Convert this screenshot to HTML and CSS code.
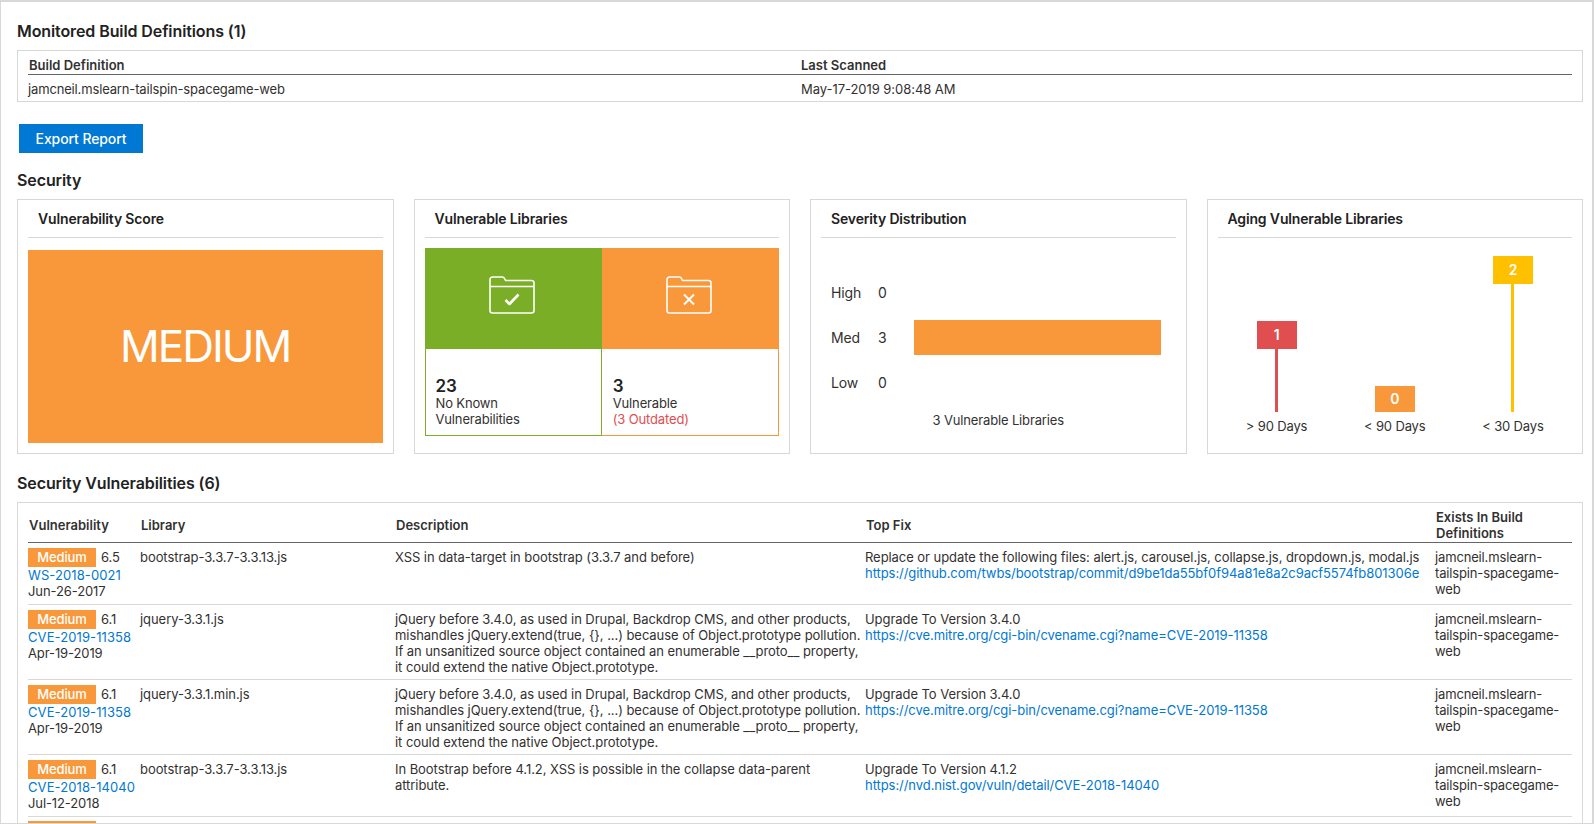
FILE: index.html
```html
<!DOCTYPE html>
<html lang="en">
<head>
  <meta charset="UTF-8">
  <title>Build Report</title>
  <link rel="stylesheet" href="styles.css">
</head>
<body>

<div class="frame">

  <h2 class="section-title first">Monitored Build Definitions (1)</h2>
  <div class="box builds">
    <table class="builds-table">
      <thead>
        <tr><th class="builds-name">Build Definition</th><th>Last Scanned</th></tr>
      </thead>
      <tbody>
        <tr><td>jamcneil.mslearn-tailspin-spacegame-web</td><td class="scanned">May-17-2019 9:08:48 AM</td></tr>
      </tbody>
    </table>
  </div>

  <button class="export-btn">Export Report</button>

  <h2 class="section-title security">Security</h2>
  <div class="cards">

    <div class="box card">
      <div class="card-title">Vulnerability Score</div>
      <div class="score">MEDIUM</div>
    </div>

    <div class="box card">
      <div class="card-title">Vulnerable Libraries</div>
      <div class="libs">
        <div class="lib lib-ok">
          <div class="lib-icon">
            <svg width="46" height="38" viewBox="0 0 46 38" fill="none" stroke="#fff" stroke-width="1.6" stroke-linejoin="round">
              <path d="M1 34.500V3.500A2.500 2.500 0 0 1 3.500 1H13.500a2 2 0 0 1 1.800 1.200L16.500 4.500H42.500A2.500 2.500 0 0 1 45 7V34.500A2.500 2.500 0 0 1 42.500 37H3.500A2.500 2.500 0 0 1 1 34.500z"/>
              <path d="M1 10.500H45"/>
              <path d="M16.500 24l4 4 9-9.500" stroke-width="2.600"/>
            </svg>
          </div>
          <div class="lib-info">
            <div class="lib-count">23</div>
            <div>No Known</div>
            <div>Vulnerabilities</div>
          </div>
        </div>
        <div class="lib lib-bad">
          <div class="lib-icon">
            <svg width="46" height="38" viewBox="0 0 46 38" fill="none" stroke="#fff" stroke-width="1.6" stroke-linejoin="round">
              <path d="M1 34.500V3.500A2.500 2.500 0 0 1 3.500 1H13.500a2 2 0 0 1 1.800 1.200L16.500 4.500H42.500A2.500 2.500 0 0 1 45 7V34.500A2.500 2.500 0 0 1 42.500 37H3.500A2.500 2.500 0 0 1 1 34.500z"/>
              <path d="M1 10.500H45"/>
              <path d="M18 18.500l10 10M28 18.500l-10 10" stroke-width="2"/>
            </svg>
          </div>
          <div class="lib-info">
            <div class="lib-count">3</div>
            <div>Vulnerable</div>
            <div class="outdated">(3 Outdated)</div>
          </div>
        </div>
      </div>
    </div>

    <div class="box card">
      <div class="card-title">Severity Distribution</div>
      <div class="severity">
        <div class="sev-row"><span class="sev-label">High</span><span class="sev-value">0</span></div>
        <div class="sev-row"><span class="sev-label">Med</span><span class="sev-value">3</span><span class="sev-bar" style="width: 247px"></span></div>
        <div class="sev-row"><span class="sev-label">Low</span><span class="sev-value">0</span></div>
      </div>
      <div class="sev-caption">3 Vulnerable Libraries</div>
    </div>

    <div class="box card">
      <div class="card-title">Aging Vulnerable Libraries</div>
      <div class="aging">
        <div class="age-col">
          <div class="flag flag-red">1</div>
          <div class="stem stem-red" style="height: 63px"></div>
          <div class="age-label">&gt; 90 Days</div>
        </div>
        <div class="age-col">
          <div class="flag flag-orange flag-short">0</div>
          <div class="age-label">&lt; 90 Days</div>
        </div>
        <div class="age-col">
          <div class="flag flag-yellow">2</div>
          <div class="stem stem-yellow" style="height: 128px"></div>
          <div class="age-label">&lt; 30 Days</div>
        </div>
      </div>
    </div>

  </div>

  <h2 class="section-title vulns">Security Vulnerabilities (6)</h2>
  <div class="box vuln-box">
    <table class="vuln-table">
      <thead>
        <tr>
          <th class="col-vuln">Vulnerability</th>
          <th class="col-lib">Library</th>
          <th class="col-desc">Description</th>
          <th class="col-fix">Top Fix</th>
          <th class="col-exists">Exists In Build Definitions</th>
        </tr>
      </thead>
      <tbody>
        <tr>
          <td class="vuln-cell"><span class="badge">Medium</span><span class="score-num">6.5</span><br><a href="#">WS-2018-0021</a><br>Jun-26-2017</td>
          <td>bootstrap-3.3.7-3.3.13.js</td>
          <td>XSS in data-target in bootstrap (3.3.7 and before)</td>
          <td>Replace or update the following files: alert.js, carousel.js, collapse.js, dropdown.js, modal.js<br><a href="#">https://github.com/twbs/bootstrap/commit/d9be1da55bf0f94a81e8a2c9acf5574fb801306e</a></td>
          <td class="exists-cell">jamcneil.mslearn-tailspin-spacegame-web</td>
        </tr>
        <tr>
          <td class="vuln-cell"><span class="badge">Medium</span><span class="score-num">6.1</span><br><a href="#">CVE-2019-11358</a><br>Apr-19-2019</td>
          <td>jquery-3.3.1.js</td>
          <td>jQuery before 3.4.0, as used in Drupal, Backdrop CMS, and other products, mishandles jQuery.extend(true, {}, ...) because of Object.prototype pollution. If an unsanitized source object contained an enumerable __proto__ property, it could extend the native Object.prototype.</td>
          <td>Upgrade To Version 3.4.0<br><a href="#">https://cve.mitre.org/cgi-bin/cvename.cgi?name=CVE-2019-11358</a></td>
          <td class="exists-cell">jamcneil.mslearn-tailspin-spacegame-web</td>
        </tr>
        <tr>
          <td class="vuln-cell"><span class="badge">Medium</span><span class="score-num">6.1</span><br><a href="#">CVE-2019-11358</a><br>Apr-19-2019</td>
          <td>jquery-3.3.1.min.js</td>
          <td>jQuery before 3.4.0, as used in Drupal, Backdrop CMS, and other products, mishandles jQuery.extend(true, {}, ...) because of Object.prototype pollution. If an unsanitized source object contained an enumerable __proto__ property, it could extend the native Object.prototype.</td>
          <td>Upgrade To Version 3.4.0<br><a href="#">https://cve.mitre.org/cgi-bin/cvename.cgi?name=CVE-2019-11358</a></td>
          <td class="exists-cell">jamcneil.mslearn-tailspin-spacegame-web</td>
        </tr>
        <tr>
          <td class="vuln-cell"><span class="badge">Medium</span><span class="score-num">6.1</span><br><a href="#">CVE-2018-14040</a><br>Jul-12-2018</td>
          <td>bootstrap-3.3.7-3.3.13.js</td>
          <td>In Bootstrap before 4.1.2, XSS is possible in the collapse data-parent attribute.</td>
          <td>Upgrade To Version 4.1.2<br><a href="#">https://nvd.nist.gov/vuln/detail/CVE-2018-14040</a></td>
          <td class="exists-cell">jamcneil.mslearn-tailspin-spacegame-web</td>
        </tr>
        <tr class="row-cut">
          <td class="vuln-cell"><span class="badge"></span></td>
          <td></td>
          <td></td>
          <td></td>
          <td></td>
        </tr>
      </tbody>
    </table>
  </div>

</div>

</body>
</html>
```

FILE: styles.css
```css
html, body {
  margin: 0;
  padding: 0;
  height: 824px;
  overflow: hidden;
}
body {
  font-family: Inter, "Open Sans", Arial, sans-serif;
  font-size: 13px;
  letter-spacing: -0.15px;
  line-height: 16px;
  color: #323130;
  background: #fff;
}
a {
  color: #0078d4;
  text-decoration: none;
}
table {
  border-collapse: collapse;
  width: 100%;
  table-layout: fixed;
}
th {
  text-align: left;
  font-weight: 600;
  letter-spacing: 0;
  padding: 0;
}
td {
  padding: 0;
  vertical-align: top;
}
.frame {
  box-sizing: border-box;
  height: 824px;
  overflow: hidden;
  padding: 19px 9px 0 16px;
  border: 1px solid #d8d8d8;
  border-top-width: 2px;
  border-right-width: 2px;
  margin: 0;
}
.box {
  box-sizing: border-box;
  border: 1px solid #d8d8d8;
  background: #fff;
}
.section-title {
  margin: 0 0 9px;
  font-size: 16px;
  letter-spacing: -0.1px;
  line-height: 20px;
  font-weight: 600;
  color: #222;
}
.section-title.first {
  margin-top: 0;
}
.section-title.security {
  margin-top: 17px;
}
.section-title.vulns {
  margin-top: 19px;
}

/* build definitions */
.builds {
  height: 52px;
  padding: 0 10px;
}
.builds-table th {
  height: 23px;
  padding: 5px 0 0 1px;
  box-sizing: border-box;
  border-bottom: 1px solid #666;
}
.builds-table td {
  padding-top: 6px;
}
.builds-table td.scanned {
  padding-left: 1px;
  letter-spacing: -0.05px;
}
.builds-name {
  width: 772px;
}
.export-btn {
  display: block;
  margin: 22px 0 0 2px;
  width: 124px;
  height: 29px;
  padding: 0;
  border: none;
  background: #0078d4;
  color: #fff;
  font-family: inherit;
  font-size: 14px;
  letter-spacing: -0.1px;
  font-weight: 500;
}

/* cards */
.cards {
  display: grid;
  grid-template-columns: repeat(4, 1fr);
  gap: 20px;
}
.card {
  height: 255px;
  padding: 0 10px;
}
.card-title {
  height: 38px;
  line-height: 38px;
  box-sizing: border-box;
  padding-left: 10px;
  border-bottom: 1px solid #d8d8d8;
  font-size: 14px;
  font-weight: 600;
  color: #222;
}
.score {
  margin-top: 12px;
  height: 193px;
  line-height: 193px;
  text-align: center;
  background: #f9983a;
  color: #fff;
  font-size: 44px;
  font-weight: 400;
  letter-spacing: -2px;
}
.libs {
  display: flex;
  margin-top: 10px;
}
.lib {
  flex: 1;
}
.lib-icon {
  box-sizing: border-box;
  height: 101px;
  padding: 0 3px 7px 0;
  display: flex;
  align-items: center;
  justify-content: center;
}
.lib-ok .lib-icon {
  background: #7aae27;
}
.lib-bad .lib-icon {
  background: #f9983a;
}
.lib-info {
  box-sizing: border-box;
  height: 87px;
  padding: 28px 10px 0 10px;
  border: 1px solid;
  border-top: none;
}
.lib-ok .lib-info {
  border-color: #7aae27;
}
.lib-bad .lib-info {
  border-color: #f9983a;
  border-left: none;
  padding-left: 11px;
}
.lib-count {
  font-size: 17px;
  line-height: 18px;
  font-weight: 600;
  color: #222;
}
.outdated {
  color: #e04e50;
}

/* severity */
.severity {
  padding: 32px 0 0 10px;
}
.sev-row {
  display: flex;
  align-items: center;
  height: 45px;
  font-size: 14px;
}
.sev-label {
  width: 47px;
}
.sev-value {
  width: 36px;
}
.sev-bar {
  height: 35px;
  background: #f9983a;
}
.sev-caption {
  margin-top: 7px;
  text-align: center;
}

/* aging */
.aging {
  display: flex;
  height: 196px;
}
.age-col {
  flex: 1;
  display: flex;
  flex-direction: column;
  justify-content: flex-end;
  align-items: center;
}
.flag {
  width: 40px;
  height: 28px;
  line-height: 28px;
  text-align: center;
  color: #fff;
  font-weight: 600;
  font-size: 14px;
}
.flag-short {
  height: 26px;
  line-height: 26px;
}
.flag-red {
  background: #e04e50;
}
.flag-orange {
  background: #f9983a;
}
.flag-yellow {
  background: #ffc000;
}
.stem {
  width: 3px;
}
.stem-red {
  background: #e04e50;
}
.stem-yellow {
  background: #ffc000;
}
.age-label {
  height: 22px;
  padding-top: 6px;
  box-sizing: border-box;
  line-height: 16px;
}

/* vulnerabilities table */
.vuln-box {
  padding: 0 10px;
  height: 600px;
}
.vuln-table th {
  height: 39px;
  box-sizing: border-box;
  padding: 6px 10px 0 1px;
  border-bottom: 1px solid #666;
}
.vuln-table td {
  padding: 6px 4px 4px 0;
  border-bottom: 1px solid #d8d8d8;
  letter-spacing: -0.06px;
}
.vuln-table td.vuln-cell {
  padding: 5px 0 5px 0;
  letter-spacing: -0.1px;
}
.vuln-table td.exists-cell {
  letter-spacing: -0.15px;
}
.vuln-cell a {
  letter-spacing: 0.1px;
}
.row-cut td.vuln-cell {
  padding-top: 4px;
}
.col-vuln {
  width: 112px;
}
.col-lib {
  width: 255px;
}
.col-desc {
  width: 470px;
}
.col-fix {
  width: 570px;
}
.badge {
  display: inline-block;
  width: 68px;
  height: 19px;
  line-height: 19px;
  text-align: center;
  background: #f9983a;
  color: #fff;
  font-weight: 500;
  vertical-align: top;
}
.score-num {
  margin-left: 5px;
  line-height: 19px;
}
```
